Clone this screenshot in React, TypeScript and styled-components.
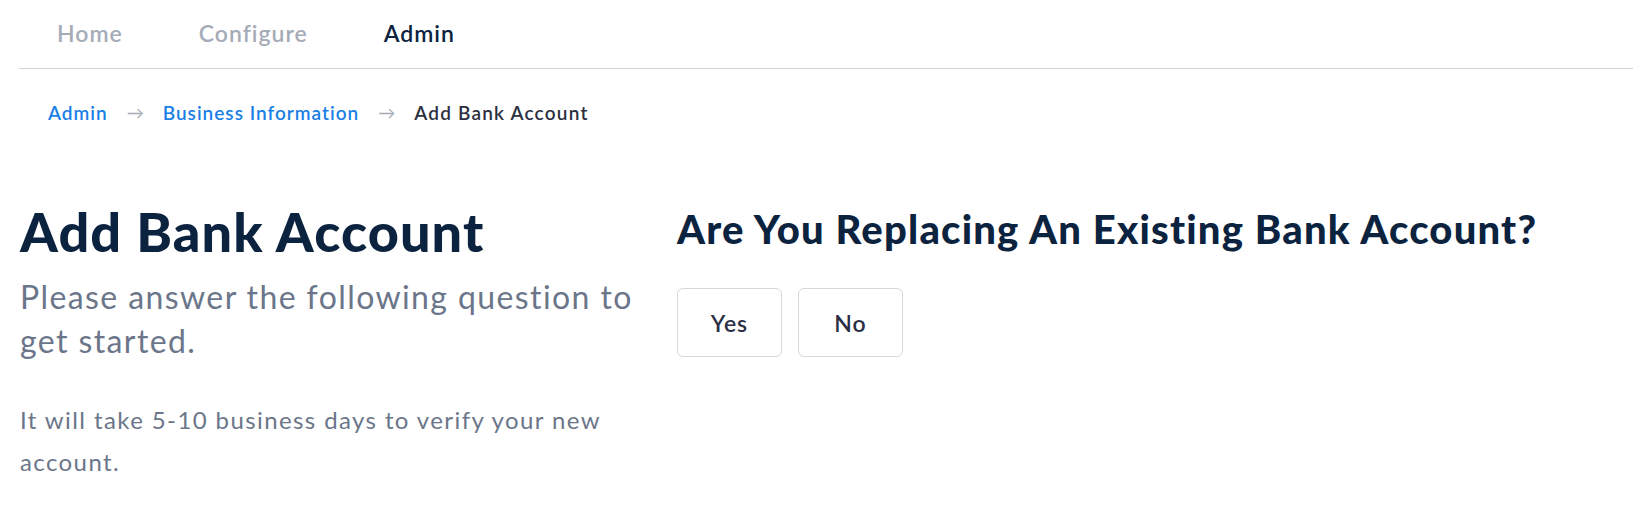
import styled, { createGlobalStyle } from 'styled-components';

const GlobalStyle = createGlobalStyle`
    body {
        margin: 0;
        background: #fff;
        font-family: Lato, 'Liberation Sans', sans-serif;
    }
`;

const Header = styled.nav`
    height: 69px;
    margin-left: 19px;
    padding: 0 0 2px 38px;
    display: flex;
    align-items: center;
    gap: 76px;
    border-bottom: 1px solid #cfd3da;
    box-sizing: border-box;
`;

const NavItem = styled.a<{ active?: boolean }>`
    font-size: 23px;
    font-weight: 600;
    letter-spacing: 1px;
    color: ${(props) => (props.active ? '#0b2240' : '#a5acb7')};
    text-decoration: none;
    cursor: pointer;
`;

const Crumbs = styled.div`
    display: flex;
    align-items: center;
    gap: 19px;
    padding: 27px 0 0 48px;
    height: 32px;
    font-size: 19px;
    font-weight: 600;
`;

const Crumb = styled.a<{ current?: boolean }>`
    color: ${(props) => (props.current ? '#2b2f40' : '#1a7fe6')};
    letter-spacing: ${(props) => (props.current ? '1.2px' : '1px')};
    text-decoration: none;
`;

const Arrow = styled.span`
    color: #a6acb6;
    font-size: 17px;
    font-weight: 400;
`;

const Main = styled.main`
    display: grid;
    grid-template-columns: 640px 1fr;
    column-gap: 17px;
    padding: 73px 20px 0 20px;
`;

const Intro = styled.section`
    display: flex;
    flex-direction: column;
`;

const Title = styled.h1`
    margin: 0;
    font-size: 54px;
    font-weight: 900;
    line-height: 62px;
    color: #0c2340;
    letter-spacing: 1.1px;
`;

const Lead = styled.p`
    margin: 12px 0 0;
    font-size: 32px;
    line-height: 44px;
    letter-spacing: 1.4px;
    color: #6b768a;
`;

const Note = styled.p`
    margin: 36px 0 0;
    font-size: 24px;
    line-height: 42px;
    letter-spacing: 1.4px;
    color: #6b768a;
`;

const Question = styled.section`
    display: flex;
    flex-direction: column;
`;

const QuestionTitle = styled.h2`
    margin: 0;
    padding-top: 4px;
    font-size: 40px;
    font-weight: 900;
    line-height: 48px;
    letter-spacing: 1.2px;
    color: #0c2340;
`;

const Choices = styled.div`
    display: flex;
    gap: 16px;
    margin-top: 35px;
`;

const Choice = styled.button`
    width: 105px;
    height: 69px;
    border: 1px solid #d3d7de;
    border-radius: 6px;
    background: #fff;
    font-family: inherit;
    font-size: 23px;
    font-weight: 600;
    letter-spacing: 1px;
    color: #2a2f45;
    cursor: pointer;
`;

export default function App() {
    return (
        <>
            <GlobalStyle />
            <Header>
                <NavItem>Home</NavItem>
                <NavItem>Configure</NavItem>
                <NavItem active>Admin</NavItem>
            </Header>
            <Crumbs>
                <Crumb>Admin</Crumb>
                <Arrow>→</Arrow>
                <Crumb>Business Information</Crumb>
                <Arrow>→</Arrow>
                <Crumb current>Add Bank Account</Crumb>
            </Crumbs>
            <Main>
                <Intro>
                    <Title>Add Bank Account</Title>
                    <Lead>Please answer the following question to get started.</Lead>
                    <Note>It will take 5-10 business days to verify your new account.</Note>
                </Intro>
                <Question>
                    <QuestionTitle>Are You Replacing An Existing Bank Account?</QuestionTitle>
                    <Choices>
                        <Choice>Yes</Choice>
                        <Choice>No</Choice>
                    </Choices>
                </Question>
            </Main>
        </>
    );
}
